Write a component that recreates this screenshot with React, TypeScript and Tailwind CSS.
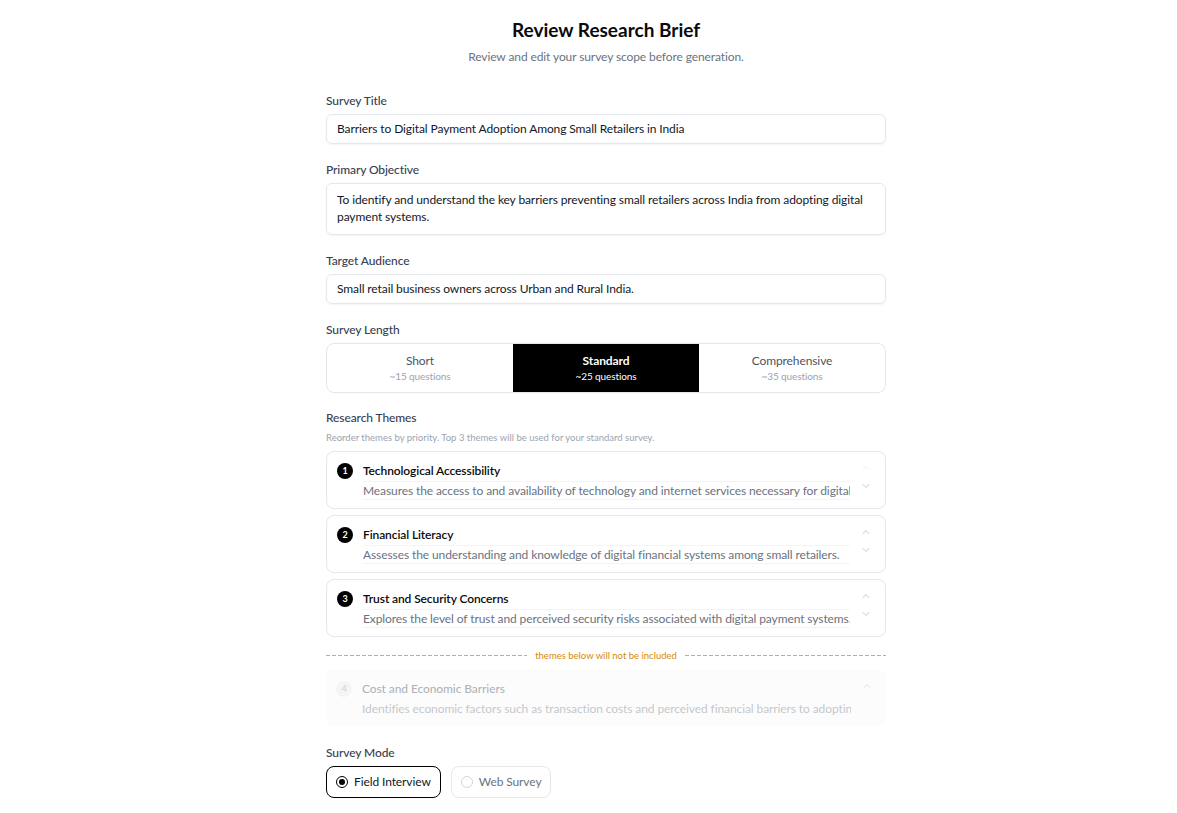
import { ChevronUp, ChevronDown } from 'lucide-react';

const themes = [
    { n: 1, title: 'Technological Accessibility', desc: 'Measures the access to and availability of technology and internet services necessary for digital payment adoption.' },
    { n: 2, title: 'Financial Literacy', desc: 'Assesses the understanding and knowledge of digital financial systems among small retailers.' },
    { n: 3, title: 'Trust and Security Concerns', desc: 'Explores the level of trust and perceived security risks associated with digital payment systems.' },
];

const lengths = [
    { name: 'Short', sub: '~15 questions', active: false },
    { name: 'Standard', sub: '~25 questions', active: true },
    { name: 'Comprehensive', sub: '~35 questions', active: false },
];

function Label({ children }: { children: React.ReactNode }) {
    return <div className="text-[12px] font-medium text-[#374151] mb-[5px] leading-[16px]">{children}</div>;
}

export default function App() {
    return (
        <div className="min-h-screen bg-white pl-[35px] font-['Lato',sans-serif] tracking-[-0.1px] text-[#111827]">
            <div className="w-[560px] mx-auto pt-[17px] pb-[14px]">
                {/* Header */}
                <h1 className="text-center text-[19px] font-bold leading-[26px] tracking-normal text-[#0a0a0a]">Review Research Brief</h1>
                <p className="text-center text-[12px] text-[#6b7280] mt-[6px] leading-[16px]">Review and edit your survey scope before generation.</p>

                <div className="mt-[28px] flex flex-col gap-[18px]">
                    <div>
                        <Label>Survey Title</Label>
                        <div className="h-[30px] border border-[#e5e7eb] rounded-md shadow-[0_1px_2px_rgba(0,0,0,0.05)] px-[10px] flex items-center text-[12px]">
                            Barriers to Digital Payment Adoption Among Small Retailers in India
                        </div>
                    </div>

                    <div>
                        <Label>Primary Objective</Label>
                        <div className="h-[52px] border border-[#e5e7eb] rounded-md shadow-[0_1px_2px_rgba(0,0,0,0.05)] px-[10px] py-[7px] text-[12px] leading-[17px]">
                            To identify and understand the key barriers preventing small retailers across India from adopting digital payment systems.
                        </div>
                    </div>

                    <div>
                        <Label>Target Audience</Label>
                        <div className="h-[30px] border border-[#e5e7eb] rounded-md shadow-[0_1px_2px_rgba(0,0,0,0.05)] px-[10px] flex items-center text-[12px]">
                            Small retail business owners across Urban and Rural India.
                        </div>
                    </div>

                    <div>
                        <Label>Survey Length</Label>
                        <div className="grid grid-cols-3 h-[50px] border border-[#e5e7eb] rounded-lg overflow-hidden">
                            {lengths.map((l) => (
                                <div key={l.name} className={l.active ? 'bg-black text-white flex flex-col items-center justify-center' : 'flex flex-col items-center justify-center'}>
                                    <span className={l.active ? 'text-[12px] font-bold leading-[16px]' : 'text-[12px] text-[#4b5563] leading-[16px]'}>{l.name}</span>
                                    <span className={l.active ? 'text-[10px] text-white leading-[14px]' : 'text-[10px] text-[#9ca3af] leading-[14px]'}>{l.sub}</span>
                                </div>
                            ))}
                        </div>
                    </div>

                    <div className="-mt-[1px]">
                        <div className="text-[12px] font-medium text-[#374151] leading-[16px]">Research Themes</div>
                        <div className="text-[9.5px] text-[#9ca3af] mt-[5px] leading-[13px] tracking-normal">Reorder themes by priority. Top 3 themes will be used for your standard survey.</div>

                        <div className="mt-[7px] flex flex-col gap-[6px]">
                            {themes.map((t) => (
                                <div key={t.n} className="h-[58px] border border-[#e5e7eb] rounded-lg flex items-start pl-[10px] pr-[13px] pt-[10px]">
                                    <span className="w-[16px] h-[16px] rounded-full bg-black text-white text-[9px] font-bold flex items-center justify-center mt-[1px] shrink-0">{t.n}</span>
                                    <div className="flex-1 min-w-0 ml-[10px] mr-[10px]">
                                        <div className="text-[12px] font-semibold leading-[17px] pb-[2px] border-b border-[#f3f4f6] text-[#0a0a0a]">{t.title}</div>
                                        <div className="text-[12px] text-[#6b7280] leading-[17px] whitespace-nowrap overflow-hidden border-b border-[#f3f4f6]">{t.desc}</div>
                                    </div>
                                    <div className="flex flex-col items-center shrink-0">
                                        <ChevronUp className={t.n === 1 ? 'w-[12px] h-[12px] text-[#e5e7eb]' : 'w-[12px] h-[12px] text-[#b0b5bd]'} strokeWidth={1.5} />
                                        <ChevronDown className="w-[12px] h-[12px] text-[#b0b5bd] mt-[6px]" strokeWidth={1.5} />
                                    </div>
                                </div>
                            ))}
                        </div>

                        {/* Cutoff divider */}
                        <div className="flex items-center gap-[8px] mt-[12px]">
                            <div className="flex-1 h-[1px] bg-[repeating-linear-gradient(to_right,#eab308_0px,#eab308_4px,transparent_4px,transparent_6px)]" />
                            <span className="text-[9.5px] text-[#d48a06] leading-[13px] tracking-normal">themes below will not be included</span>
                            <div className="flex-1 h-[1px] bg-[repeating-linear-gradient(to_right,#eab308_0px,#eab308_4px,transparent_4px,transparent_6px)]" />
                        </div>

                        <div className="mt-[8px] h-[56px] rounded-lg bg-[#fafafa] flex items-start pl-[10px] pr-[13px] pt-[10px] opacity-40">
                            <span className="w-[16px] h-[16px] rounded-full bg-[#e5e7eb] text-[#9ca3af] text-[9px] font-bold flex items-center justify-center mt-[1px] shrink-0">4</span>
                            <div className="flex-1 min-w-0 ml-[10px] mr-[10px]">
                                <div className="text-[12px] font-medium leading-[17px] pb-[2px] text-[#374151]">Cost and Economic Barriers</div>
                                <div className="text-[12px] text-[#6b7280] leading-[17px] mt-[1px] whitespace-nowrap overflow-hidden">Identifies economic factors such as transaction costs and perceived financial barriers to adopting digital payments.</div>
                            </div>
                            <div className="flex flex-col items-center shrink-0">
                                <ChevronUp className="w-[12px] h-[12px] text-[#9ca3af]" strokeWidth={1.5} />
                            </div>
                        </div>
                    </div>

                    <div className="mt-[1px]">
                        <Label>Survey Mode</Label>
                        <div className="flex gap-[10px]">
                            <button className="h-[32px] px-[9px] border border-black rounded-lg flex items-center gap-[6px] text-[12px] text-[#111827]">
                                <span className="w-[12px] h-[12px] rounded-full border border-black flex items-center justify-center">
                                    <span className="w-[6px] h-[6px] rounded-full bg-black" />
                                </span>
                                Field Interview
                            </button>
                            <button className="h-[32px] px-[9px] border border-[#e5e7eb] rounded-lg flex items-center gap-[6px] text-[12px] text-[#6b7280]">
                                <span className="w-[12px] h-[12px] rounded-full border border-[#d1d5db]" />
                                Web Survey
                            </button>
                        </div>
                    </div>
                </div>
            </div>
        </div>
    );
}
